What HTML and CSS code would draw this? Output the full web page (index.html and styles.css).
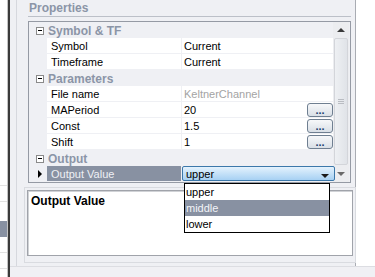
FILE: index.html
```html
<!DOCTYPE html>
<html>

<head>
    <title>Properties</title>
    <link rel="stylesheet" href="styles.css">
</head>

<body>

    <div class="side">
        <div class="side-row first"></div>
        <div class="side-row"></div>
        <div class="side-row picked"></div>
        <div class="side-row"></div>
        <div class="side-row"></div>
    </div>

    <div class="main">
        <div class="top">
            <div class="panel">
                <div class="frame">
                    <div class="title">Properties</div>

                    <div class="grid">
                        <div class="rows">
                            <div class="row cat"><span class="toggle"></span><span class="cat-name">Symbol &amp; TF</span></div>
                            <div class="row"><span class="gutter"></span><span class="name">Symbol</span><span class="value">Current</span></div>
                            <div class="row"><span class="gutter"></span><span class="name">Timeframe</span><span class="value">Current</span></div>
                            <div class="row cat"><span class="toggle"></span><span class="cat-name">Parameters</span></div>
                            <div class="row"><span class="gutter"></span><span class="name">File name</span><span class="value readonly">KeltnerChannel</span></div>
                            <div class="row"><span class="gutter"></span><span class="name">MAPeriod</span><span class="value">20<span class="dots">...</span></span></div>
                            <div class="row"><span class="gutter"></span><span class="name">Const</span><span class="value">1.5<span class="dots">...</span></span></div>
                            <div class="row"><span class="gutter"></span><span class="name">Shift</span><span class="value">1<span class="dots">...</span></span></div>
                            <div class="row cat"><span class="toggle"></span><span class="cat-name">Output</span></div>
                            <div class="row selected">
                                <span class="gutter"><span class="pointer"></span></span>
                                <span class="name">Output Value</span>
                                <span class="value combo">
                                    <span class="combo-text">upper</span>
                                    <span class="combo-arrow"></span>
                                    <span class="list">
                                        <span class="item">upper</span>
                                        <span class="item active">middle</span>
                                        <span class="item">lower</span>
                                    </span>
                                </span>
                            </div>
                        </div>
                        <div class="scroll">
                            <div class="sbtn"><span class="tri-up"></span></div>
                            <div class="thumb"><span class="grip"></span></div>
                            <div class="sbtn"><span class="tri-down"></span></div>
                        </div>
                    </div>

                    <div class="desc-outer">
                        <div class="desc">Output Value</div>
                    </div>
                </div>
            </div>
            <div class="blank"></div>
        </div>
        <div class="bottom"></div>
    </div>

</body>

</html>
```

FILE: styles.css
```css
body {
    margin: 0;
    height: 277px;
    overflow: hidden;
    display: flex;
    font-family: 'Liberation Sans', Arial, sans-serif;
    font-size: 11px;
    color: #000;
    background-color: #f0f0f4;
}

/* strip of the list behind, on the left */
.side {
    width: 7px;
    border-right: 1px solid #c4c4c4;
    box-shadow: 2px 0 0 #3a3a3a;
    margin-right: 2px;
    background: #fff;
    display: flex;
    flex-direction: column;
}

.side-row {
    height: 15px;
    border-bottom: 1px solid #e2e2e2;
}

.side-row.first {
    height: 185px;
}

.side-row.picked {
    height: 16px;
    margin-top: 19px;
    border-bottom: 0;
    background: #8891a2;
}

.main {
    flex: 1;
    display: flex;
    flex-direction: column;
}

.top {
    height: 266px;
    display: flex;
    border-bottom: 1px solid #dcdde2;
}

.panel {
    width: 339px;
    padding-left: 6px;
    background: #eff0f4;
    border-right: 1px solid #a9acb3;
}

.frame {
    height: 100%;
    border-left: 1px solid #d6d8de;
}

.blank {
    flex: 1;
    background: #fff;
}

.bottom {
    flex: 1;
}

.title {
    margin-left: 11px;
    width: 322px;
    padding-left: 1px;
    height: 16px;
    line-height: 16px;
    font-size: 12px;
    font-weight: bold;
    color: #8b95a7;
    border-bottom: 1px solid #bcc0c8;
}

/* property grid */
.grid {
    display: flex;
    margin: 4px 0 0 11px;
    width: 320px;
    padding-right: 1px;
    border: 1px solid #959aa4;
    background: #eff0f4;
}

.rows {
    width: 304px;
}

.row {
    display: flex;
    height: 16px;
}

.gutter {
    width: 18px;
    flex-shrink: 0;
}

.name {
    width: 130px;
    height: 15px;
    padding-left: 4px;
    margin-right: 1px;
    line-height: 16px;
    background: #fff;
    white-space: nowrap;
}

.value {
    position: relative;
    display: flex;
    width: 149px;
    height: 15px;
    padding-left: 2px;
    line-height: 16px;
    background: #fff;
    white-space: nowrap;
}

.value.readonly {
    color: #a3a3a3;
}

.dots {
    margin-left: auto;
    margin-top: 1px;
    width: 24px;
    height: 12px;
    line-height: 12px;
    text-align: center;
    font-weight: bold;
    color: #1c3f6e;
    border: 1px solid #6f7f91;
    border-radius: 3px;
    background: linear-gradient(#f7f8fa, #d9dfe6);
}

.cat-name {
    padding-top: 1px;
    line-height: 16px;
    font-size: 12px;
    font-weight: bold;
    color: #8b95a7;
}

.toggle {
    position: relative;
    width: 6px;
    height: 6px;
    margin: 5px 4px 0 7px;
    border: 1px solid #8a8a8a;
    background: #fff;
}

.toggle::after {
    content: "";
    position: absolute;
    left: 1px;
    top: 2px;
    width: 4px;
    height: 1px;
    background: #000;
}

.selected .name {
    background: #8891a2;
    color: #eef0f5;
}

.pointer {
    display: block;
    width: 0;
    height: 0;
    margin: 4px 0 0 9px;
    border-top: 4px solid transparent;
    border-bottom: 4px solid transparent;
    border-left: 4px solid #000;
}

.combo {
    width: 148px;
    height: 13px;
    padding-left: 3px;
    line-height: 14px;
    border: 1px solid #3c78aa;
    border-radius: 2px;
    background: linear-gradient(#e4f2fd, #a7d1f3);
    margin-right: -2px;
}

.combo-text {
    flex: 1;
}

.combo-arrow {
    width: 0;
    height: 0;
    margin: 7px 5px 0 0;
    border-left: 4px solid transparent;
    border-right: 4px solid transparent;
    border-top: 4px solid #1a1a1a;
}

/* dropdown list, open over the description */
.list {
    position: absolute;
    left: 1px;
    top: 16px;
    z-index: 2;
    width: 144px;
    border: 1px solid #000;
    background: #fff;
    display: flex;
    flex-direction: column;
}

.item {
    height: 16px;
    line-height: 16px;
    padding-left: 1px;
    color: #000;
}

.item.active {
    background: #8891a2;
    color: #f2f4f8;
}

/* scroll bar */
.scroll {
    width: 16px;
    display: flex;
    flex-direction: column;
    background: #ecedf0;
}

.sbtn {
    height: 16px;
    display: flex;
    align-items: center;
    justify-content: center;
}

.tri-up {
    width: 0;
    height: 0;
    border-left: 4px solid transparent;
    border-right: 4px solid transparent;
    border-bottom: 4px solid #3a3a3a;
}

.tri-down {
    width: 0;
    height: 0;
    border-left: 4px solid transparent;
    border-right: 4px solid transparent;
    border-top: 4px solid #6a6a6a;
}

.thumb {
    flex: 1;
    margin: 0 1px 1px;
    border: 1px solid #d3d5da;
    border-radius: 2px;
    background: linear-gradient(to right, #eef0f3, #e0e3e8);
    display: flex;
    align-items: center;
    justify-content: center;
}

.grip {
    width: 6px;
    height: 5px;
    background: repeating-linear-gradient(#b9bcc2 0 1px, transparent 1px 2px);
}

/* description box */
.desc-outer {
    margin: 4px 0 0 7px;
    width: 326px;
    height: 70px;
    padding: 2px;
    border: 1px solid #d9dbe0;
}

.desc {
    height: 62px;
    padding: 2px 0 0 3px;
    border: 1px solid #a0a3aa;
    box-shadow: inset 1px 1px 0 #d0d2d6;
    background: #fff;
    font-size: 12px;
    font-weight: bold;
    line-height: 16px;
}
```
